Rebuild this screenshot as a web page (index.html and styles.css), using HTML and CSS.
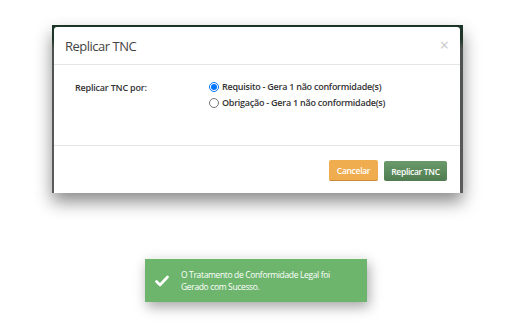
FILE: index.html
```html
<!DOCTYPE html>
<html lang="pt">
<head>
    <meta charset="UTF-8">
    <link rel="stylesheet" href="styles.css">
    <title>Replicar TNC</title>
</head>
<body>
    <div class="shot">
        <div class="modal">
            <div class="modal-header">
                <h4>Replicar TNC</h4>
                <span class="close">&times;</span>
            </div>
            <div class="modal-body">
                <label class="field-label">Replicar TNC por:</label>
                <div class="options">
                    <label class="option"><input type="radio" name="tipo" checked> Requisito - Gera 1 não conformidade(s)</label>
                    <label class="option"><input type="radio" name="tipo"> Obrigação - Gera 1 não conformidade(s)</label>
                </div>
            </div>
            <div class="modal-footer">
                <button class="btn cancel">Cancelar</button>
                <button class="btn ok">Replicar TNC</button>
            </div>
        </div>
    </div>

    <div class="toast">
        <svg class="check" width="14" height="12" viewBox="0 0 14 12">
            <path d="M1.5 6.5 L5 10 L12.5 2" fill="none" stroke="#fff" stroke-width="2.6" stroke-linecap="round" stroke-linejoin="round"/>
        </svg>
        <p>O Tratamento de Conformidade Legal foi<br>Gerado com Sucesso.</p>
    </div>
</body>
</html>
```

FILE: styles.css
```css
* {
    margin: 0;
    padding: 0;
    box-sizing: border-box;
    font-family: "Open Sans", sans-serif;
}

body {
    background-color: #fff;
    width: 517px;
    height: 327px;
    padding-top: 25px;
    overflow: hidden;
}

.shot {
    margin-left: 52px;
    width: 411px;
    height: 168px;
    padding: 2px 3px 0 2px;
    background: linear-gradient(#1d3526 0, #1d3526 8%, #4e524f 14%, #5b5b5b 100%);
    box-shadow: 0 9px 16px rgba(0, 0, 0, 0.45);
}

.modal {
    background-color: #fff;
    height: 100%;
    border-radius: 3px 3px 0 0;
}

.modal-header {
    height: 38px;
    padding: 10px 11px 0 11px;
    display: flex;
    justify-content: space-between;
    border-bottom: 1px solid #e5e5e5;
}

.modal-header h4 {
    font-weight: normal;
    font-size: 13px;
    letter-spacing: -0.5px;
    color: #444;
}

.close {
    color: #c8c8c8;
    font-size: 16px;
    line-height: 12px;
    margin-top: 2px;
}

.modal-body {
    height: 81px;
    padding: 16px 0 0 21px;
    display: flex;
    border-bottom: 1px solid #e5e5e5;
}

.field-label {
    width: 134px;
    font-size: 9px;
    font-weight: 600;
    letter-spacing: -0.2px;
    color: #333;
}

.options {
    display: flex;
    flex-direction: column;
    gap: 3px;
    margin-top: -1px;
}

.option {
    font-size: 9px;
    font-weight: 600;
    letter-spacing: -0.25px;
    color: #333;
    display: flex;
    align-items: center;
    gap: 3px;
}

.option input {
    width: 10px;
    height: 10px;
    margin: 0;
}

.modal-footer {
    display: flex;
    justify-content: flex-end;
    gap: 6px;
    padding: 14px 13px 0 0;
}

.btn {
    height: 21px;
    padding: 0;
    border: none;
    border-radius: 2px;
    color: #fff;
    font-size: 8.5px;
    font-weight: 600;
    letter-spacing: -0.3px;
    white-space: nowrap;
}

.btn.cancel {
    width: 49px;
    background-color: #efad4f;
    border-bottom: 1px solid #c98a30;
}

.btn.ok {
    width: 63px;
    height: 20px;
    margin-top: 1px;
    background: linear-gradient(#6a9a6a, #4f7d51);
}

.toast {
    margin: 65px 0 0 145px;
    width: 222px;
    height: 44px;
    background-color: #6db56d;
    border-top: 1px solid #eef6ee;
    box-shadow: 2px 5px 12px rgba(0, 0, 0, 0.35);
    display: flex;
    align-items: center;
    padding-left: 10px;
    gap: 12px;
}

.toast p {
    color: #fff;
    font-size: 8.5px;
    line-height: 12px;
    letter-spacing: -0.35px;
}
```
